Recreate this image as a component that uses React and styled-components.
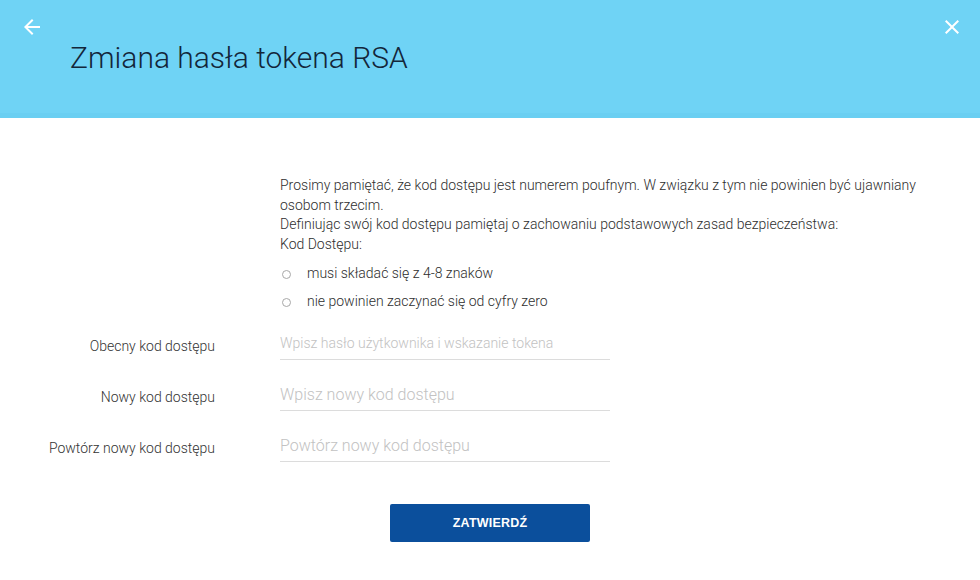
import React from 'react';
import styled, { createGlobalStyle } from 'styled-components';

const GlobalStyle = createGlobalStyle`
  html, body {
    margin: 0;
    padding: 0;
    background: #ffffff;
    font-family: Roboto, 'Liberation Sans', Arial, sans-serif;
  }
  * {
    box-sizing: border-box;
  }
`;

function App() {
  return (
    <Page>
      <GlobalStyle />
      <Header>
        <IconRow>
          <IconButton aria-label="Wstecz">
            <Icon viewBox="0 0 24 24">
              <path d="M20 11H7.83l5.59-5.59L12 4l-8 8 8 8 1.41-1.41L7.83 13H20v-2z" />
            </Icon>
          </IconButton>
          <IconButton aria-label="Zamknij">
            <Icon viewBox="0 0 24 24">
              <path d="M19 6.41L17.59 5 12 10.59 6.41 5 5 6.41 10.59 12 5 17.59 6.41 19 12 13.41 17.59 19 19 17.59 13.41 12z" />
            </Icon>
          </IconButton>
        </IconRow>
        <Title>Zmiana hasła tokena RSA</Title>
      </Header>

      <Main>
        <Info>
          <p>
            Prosimy pamiętać, że kod dostępu jest numerem poufnym. W związku z
            tym nie powinien być ujawniany osobom trzecim.
          </p>
          <p>
            Definiując swój kod dostępu pamiętaj o zachowaniu podstawowych zasad
            bezpieczeństwa:
          </p>
          <p>Kod Dostępu:</p>
          <Rules>
            <li>musi składać się z 4-8 znaków</li>
            <li>nie powinien zaczynać się od cyfry zero</li>
          </Rules>
        </Info>

        <Form>
          <Row>
            <Label>Obecny kod dostępu</Label>
            <Input
              type="password"
              small
              placeholder="Wpisz hasło użytkownika i wskazanie tokena"
            />
          </Row>
          <Row>
            <Label>Nowy kod dostępu</Label>
            <Input type="password" placeholder="Wpisz nowy kod dostępu" />
          </Row>
          <Row>
            <Label>Powtórz nowy kod dostępu</Label>
            <Input type="password" placeholder="Powtórz nowy kod dostępu" />
          </Row>
        </Form>

        <Actions>
          <SubmitButton>ZATWIERDŹ</SubmitButton>
        </Actions>
      </Main>
    </Page>
  );
}

const Page = styled.div`
  width: 980px;
  min-height: 580px;
  background: #ffffff;
`;

const Header = styled.header`
  height: 118px;
  background: #6fd3f5;
  box-shadow: inset 0 -5px 0 rgba(40, 150, 200, 0.06);
  display: flex;
  flex-direction: column;
`;

const IconRow = styled.div`
  display: flex;
  justify-content: space-between;
  padding: 15px 16px 0 20px;
`;

const IconButton = styled.button`
  width: 24px;
  height: 24px;
  padding: 0;
  border: none;
  background: transparent;
  cursor: pointer;
  display: flex;
`;

const Icon = styled.svg`
  width: 24px;
  height: 24px;
  fill: #ffffff;
`;

const Title = styled.h1`
  margin: 1px 0 0 70px;
  font-family: Roboto, 'Liberation Sans', Arial, sans-serif;
  font-weight: 300;
  font-size: 30px;
  line-height: 36px;
  color: #13263a;
`;

const Main = styled.main`
  padding-top: 58px;
  display: flex;
  flex-direction: column;
`;

const Info = styled.section`
  margin-left: 280px;
  width: 650px;
  font-size: 14px;
  font-weight: 300;
  line-height: 19.5px;
  color: #2e2e2e;

  p {
    margin: 0;
  }
`;

const Rules = styled.ul`
  list-style: none;
  margin: 10px 0 0;
  padding: 0;

  li {
    position: relative;
    padding-left: 27px;
    line-height: 19px;
    margin-bottom: 9px;
  }

  li::before {
    content: '';
    position: absolute;
    left: 2px;
    top: 6px;
    width: 7px;
    height: 7px;
    border: 1px solid #a8a8a8;
    border-radius: 50%;
  }
`;

const Form = styled.div`
  margin-top: 8px;
  display: flex;
  flex-direction: column;
  gap: 19px;
`;

const Row = styled.div`
  display: grid;
  grid-template-columns: 215px 330px;
  column-gap: 65px;
  align-items: center;
`;

const Label = styled.label`
  text-align: right;
  font-size: 14px;
  font-weight: 300;
  color: #333333;
  padding-top: 3px;
`;

const Input = styled.input`
  height: 32px;
  width: 330px;
  padding: 0 0 1px;
  border: none;
  border-bottom: 1px solid #dcdcdc;
  outline: none;
  background: transparent;
  font-family: Roboto, 'Liberation Sans', Arial, sans-serif;
  font-size: ${(props) => (props.small ? '14px' : '16px')};
  color: #333333;

  &::placeholder {
    color: #c2c2c2;
    font-weight: 300;
  }
`;

const Actions = styled.div`
  display: flex;
  justify-content: center;
  margin-top: 42px;
`;

const SubmitButton = styled.button`
  width: 200px;
  height: 38px;
  border: none;
  border-radius: 2px;
  background: #0b4f9c;
  color: #ffffff;
  font-family: 'Liberation Sans', Arial, sans-serif;
  font-weight: 700;
  font-size: 12.5px;
  letter-spacing: 0.2px;
  cursor: pointer;
`;

export default App;
